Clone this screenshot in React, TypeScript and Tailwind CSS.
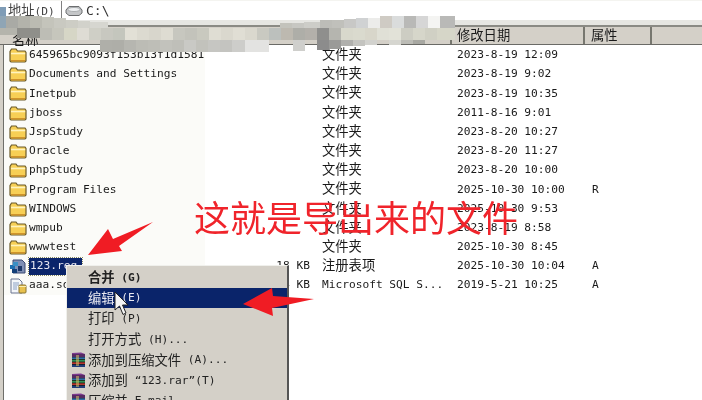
const mono = "font-['DejaVu_Sans_Mono','Noto_Sans_CJK_SC',monospace] text-[11.2px]";
const cjk = "font-['Noto_Sans_CJK_SC',sans-serif] text-[13.3px] leading-[16px]";

type Row = { name: string; kind: 'folder' | 'reg' | 'sql'; size?: string; type: string; date: string; attr?: string };

const rows: Row[] = [
  { name: '645965bc9093f153b13f1d1581', kind: 'folder', type: '文件夹', date: '2023-8-19 12:09' },
  { name: 'Documents and Settings', kind: 'folder', type: '文件夹', date: '2023-8-19 9:02' },
  { name: 'Inetpub', kind: 'folder', type: '文件夹', date: '2023-8-19 10:35' },
  { name: 'jboss', kind: 'folder', type: '文件夹', date: '2011-8-16 9:01' },
  { name: 'JspStudy', kind: 'folder', type: '文件夹', date: '2023-8-20 10:27' },
  { name: 'Oracle', kind: 'folder', type: '文件夹', date: '2023-8-20 11:27' },
  { name: 'phpStudy', kind: 'folder', type: '文件夹', date: '2023-8-20 10:00' },
  { name: 'Program Files', kind: 'folder', type: '文件夹', date: '2025-10-30 10:00', attr: 'R' },
  { name: 'WINDOWS', kind: 'folder', type: '文件夹', date: '2025-10-30 9:53' },
  { name: 'wmpub', kind: 'folder', type: '文件夹', date: '2023-8-19 8:58' },
  { name: 'wwwtest', kind: 'folder', type: '文件夹', date: '2025-10-30 8:45' },
  { name: '123.reg', kind: 'reg', size: '18 KB', type: '注册表项', date: '2025-10-30 10:04', attr: 'A' },
  { name: 'aaa.sql', kind: 'sql', size: '4 KB', type: 'Microsoft SQL S...', date: '2019-5-21 10:25', attr: 'A' },
];

// the blurred-out strip across the header: [x, y, w, h, colour]
const mosaic: [number, number, number, number, string][] = [
  [0, 7, 6, 9, '#7f9cb6'], [0, 16, 6, 12, '#8fa5b5'], [6, 16, 12, 12, '#a9aaa5'], [18, 16, 12, 12, '#b3b3ab'],
  [30, 16, 12, 12, '#bbbbb2'], [42, 17, 12, 11, '#c4c4bb'], [54, 18, 12, 10, '#c9c9c1'], [66, 20, 12, 8, '#cdcdc5'],
  [78, 21, 12, 7, '#d2d2cb'], [90, 22, 18, 6, '#d6d6d0'],
  [280, 23, 12, 5, '#c3c3bc'], [292, 23, 12, 5, '#c7c7c2'], [304, 22, 16, 6, '#cdcdc8'], [320, 20, 12, 8, '#bdbdb8'],
  [332, 20, 12, 8, '#c0c0bb'], [344, 19, 12, 9, '#c8c8c6'], [356, 18, 12, 10, '#d0d2d3'], [368, 18, 12, 10, '#ececea'],
  [380, 16, 12, 12, '#cfcbc4'], [392, 16, 12, 12, '#dadcdc'], [404, 16, 12, 12, '#b9b9b7'], [416, 16, 12, 12, '#d6d6d6'],
  [428, 16, 12, 12, '#f4f4f2'], [440, 16, 15, 12, '#b9b9b7'],
  [0, 28, 17, 7, '#b4b4ac'], [17, 28, 23, 10, '#8f8f8a'], [40, 28, 12, 12, '#bdbdb5'], [52, 28, 12, 12, '#c6c6bc'],
  [64, 28, 13, 12, '#d6d6c6'], [77, 28, 12, 12, '#dedcd4'], [89, 28, 12, 12, '#cfcfc6'], [101, 28, 12, 12, '#c8c8c0'],
  [113, 28, 12, 12, '#c4c6bd'], [125, 28, 12, 12, '#e2e0d6'], [137, 28, 12, 12, '#dcdad0'], [149, 28, 12, 12, '#d8d6cc'],
  [161, 28, 12, 12, '#dedcd2'], [173, 28, 12, 12, '#c7c7bf'], [185, 28, 12, 12, '#c3c3bb'], [197, 28, 12, 12, '#c9c9bf'],
  [209, 28, 12, 12, '#dfddd3'], [221, 28, 12, 12, '#dad8ce'], [233, 28, 12, 12, '#e0ded4'], [245, 28, 12, 12, '#dad8ce'],
  [257, 28, 12, 12, '#c9c9c1'], [269, 28, 12, 12, '#bcc0bd'], [281, 28, 12, 12, '#bdb9b0'], [293, 28, 12, 12, '#aeaea8'],
  [305, 28, 12, 12, '#b3b0aa'], [317, 28, 12, 12, '#8f8f8d'], [329, 28, 12, 12, '#b5b5af'], [341, 28, 12, 12, '#d8d8cc'],
  [353, 28, 12, 12, '#dadace'], [365, 28, 12, 12, '#d8d6ca'], [377, 28, 12, 12, '#e0e0d6'], [389, 28, 12, 12, '#e2e2d8'],
  [401, 28, 12, 12, '#cdcdc3'], [413, 28, 12, 12, '#d6d6ca'], [425, 28, 12, 12, '#d0d0c4'], [437, 28, 18, 12, '#d6d6c8'],
  [100, 40, 12, 12, '#afafa9'], [112, 40, 12, 12, '#aeaea8'], [124, 40, 12, 12, '#b6b6b0'], [136, 40, 12, 12, '#bcbcb5'],
  [148, 40, 12, 12, '#bebeb7'], [160, 40, 12, 12, '#c2c2bc'], [172, 40, 12, 12, '#bfbfb9'], [184, 40, 12, 12, '#c9c9c5'],
  [196, 40, 12, 12, '#c2c2bc'], [208, 40, 12, 12, '#c6c6c2'], [220, 40, 12, 12, '#c4c4c0'], [232, 40, 13, 12, '#cdcdca'],
  [245, 40, 24, 12, '#e3e3e1'], [293, 40, 12, 11, '#cfcfcc'],
  [317, 40, 12, 10, '#8c8c8c'], [329, 40, 12, 9, '#9a9a98'], [341, 40, 12, 6, '#b0b0ad'], [353, 40, 12, 6, '#c4c4c0'],
  [365, 40, 12, 5, '#d2d2ce'], [389, 40, 12, 5, '#d6d6d0'], [401, 40, 12, 4, '#bcbcb6'], [413, 40, 12, 4, '#a8a8a2'],
];

function FolderIcon() {
  return (
    <svg width="18" height="15" viewBox="0 0 18 15" className="shrink-0">
      <path d="M1 3.5 L2.5 1 H7 L8.5 3 H16 L17 4.5 V13 L16 14 H2 L1 13 Z" fill="#f7cf55" stroke="#6b5a2a" strokeWidth="1.2" />
      <path d="M2 5.5 H16.2" stroke="#fff3bd" strokeWidth="1.6" />
      <path d="M2 12.7 H16" stroke="#d0932a" strokeWidth="1.4" />
    </svg>
  );
}

function RegIcon() {
  return (
    <svg width="18" height="16" viewBox="0 0 18 16" className="shrink-0">
      <path d="M4 1 H13 L16 4 V14 H4 Z" fill="#7f8fb5" stroke="#3c4a72" />
      <rect x="1" y="6" width="5" height="4" fill="#1f6fb0" />
      <rect x="4" y="3" width="5" height="4" fill="#3a8fc4" />
      <rect x="3" y="10" width="5" height="4" fill="#143f78" />
      <rect x="9" y="7" width="4" height="5" fill="#1c3768" />
    </svg>
  );
}

function SqlIcon() {
  return (
    <svg width="18" height="16" viewBox="0 0 18 16" className="shrink-0">
      <path d="M2 1 H10 L13 4 V15 H2 Z" fill="#f4f6fa" stroke="#6a7590" />
      <path d="M4 5 H10 M4 7 H10 M4 9 H8 M4 11 H8" stroke="#8aa0c4" />
      <rect x="10" y="7" width="7" height="8" rx="1" fill="#e8c14f" stroke="#8a7430" />
      <path d="M10 8.5 H17" stroke="#fbeeb0" />
    </svg>
  );
}

function RarIcon() {
  return (
    <svg width="16" height="15" viewBox="0 0 16 15" className="shrink-0">
      <path d="M2 1 L11 0.5 L15 2 V5 H2 Z" fill="#7c3a8f" />
      <path d="M2 5 H15 V7 H2 Z" fill="#2f6fa8" />
      <path d="M2 7 H15 V10 H2 Z" fill="#2f8f55" />
      <path d="M2 10 H15 V12 H2 Z" fill="#b8372f" />
      <path d="M2 12 H15 V15 H2 Z" fill="#1f3d7a" />
      <path d="M2 3 H15 M2 5 H15 M2 7.5 H15 M2 10 H15 M2 12.5 H15" stroke="#111" strokeWidth="0.7" />
      <rect x="6" y="3" width="3" height="11" fill="#d8c26a" opacity="0.55" />
    </svg>
  );
}

function MenuItem({ icon, active, bold, label, hint }: { icon?: boolean; active?: boolean; bold?: boolean; label: string; hint: string }) {
  return (
    <div className={`flex h-[20.6px] items-center pl-[1px] ${active ? 'bg-[#0a246a] text-[#e8e8f0]' : 'text-[#222]'}`}>
      <div className="flex w-[20px] justify-center">{icon && <RarIcon />}</div>
      <span className={`${cjk} whitespace-nowrap ${bold ? 'font-bold' : ''}`}>{label}</span>
      <span className={`${mono} mt-[2px] whitespace-pre ${bold ? 'font-bold' : ''}`}>{hint}</span>
    </div>
  );
}

export default function App() {
  return (
    <div className="relative h-[400px] w-[702px] overflow-hidden bg-white text-[#1a1a1a] blur-[0.35px]">
      {/* address bar */}
      <div className="flex h-[20px] items-center border-t border-[#f4f4f0]">
        <div className={`${cjk} w-[61px] whitespace-nowrap pl-2 text-[#444]`}>
          地址<span className={mono}>(D)</span>
        </div>
        <div className="h-full w-px bg-[#808080]" />
        <svg width="20" height="12" viewBox="0 0 20 12" className="ml-[2px]">
          <path d="M2 5 L5 1.5 H15 L18 5 V8 L15 10.5 H5 L2 8 Z" fill="#c4c6c8" stroke="#6c6e70" />
          <ellipse cx="10" cy="4.5" rx="6" ry="2" fill="#eef0f2" stroke="#8c8e90" strokeWidth="0.6" />
        </svg>
        <span className="ml-[2px] font-['DejaVu_Sans_Mono',monospace] text-[13px] text-[#333]">C:\</span>
      </div>

      {/* band above the column heads */}
      <div className="h-[7px] border-b-2 border-[#8a8a84] bg-[#e6e6e2]" />

      {/* column heads */}
      <div className="flex h-[18px] border-b border-[#6a6a66] bg-[#d4d0c8] pl-[4px]">
        <div className="w-[448px] border-r-2 border-[#77776f]">
          <span className={`${cjk} pl-2`}>名称</span>
        </div>
        <div className={`${cjk} w-[133px] border-r-2 border-[#77776f] pl-[5px]`}>修改日期</div>
        <div className={`${cjk} w-[67px] border-r-2 border-[#77776f] pl-[6px]`}>属性</div>
      </div>

      {/* file list */}
      <div className="flex h-[355px] border-l-[3px] border-l-[#d4d0c8]">
        <div className="w-full border-l border-l-[#6f6f6a] pt-[1px]">
          {rows.map((row) => (
            <div key={row.name} className={`${mono} flex h-[19.2px] items-center whitespace-nowrap`}>
              <div className="flex h-full w-[201px] shrink-0 items-center bg-[#fbfbf8] pl-[5px]">
                {row.kind === 'folder' && <FolderIcon />}
                {row.kind === 'reg' && <RegIcon />}
                {row.kind === 'sql' && <SqlIcon />}
                {row.kind === 'reg' ? (
                  <span className="ml-[2px] bg-[#0a246a] pl-px pr-[5px] text-[#e6e6f0] outline-1 outline-dotted outline-[#8a8a60]">
                    {row.name}
                  </span>
                ) : (
                  <span className="ml-[2px]">{row.name}</span>
                )}
              </div>
              <div className="w-[105px] shrink-0 text-right">{row.size}</div>
              <div className="w-[12px] shrink-0" />
              <div className={`w-[135px] shrink-0 ${row.type.startsWith('Micro') ? '' : `${cjk} -mt-[3px]`}`}>{row.type}</div>
              <div className="w-[135px] shrink-0">{row.date}</div>
              <div>{row.attr}</div>
            </div>
          ))}
        </div>
      </div>

      {/* pixelated strip hiding the toolbar */}
      <svg width="460" height="60" viewBox="0 0 460 60" className="absolute left-0 top-0">
        {mosaic.map(([x, y, w, h, fill]) => (
          <rect key={`${x}-${y}`} x={x} y={y} width={w} height={h} fill={fill} />
        ))}
      </svg>

      {/* context menu */}
      <div className="absolute left-[66px] top-[265px] h-[140px] w-[223px] border border-r-2 border-[#f0f0ec] border-r-[#555] bg-[#d4d0c8] pt-[1px]">
        <MenuItem bold label="合并" hint=" (G)" />
        <MenuItem active label="编辑" hint=" (E)" />
        <MenuItem label="打印" hint=" (P)" />
        <MenuItem label="打开方式" hint=" (H)..." />
        <MenuItem icon label="添加到压缩文件" hint=" (A)..." />
        <MenuItem icon label="添加到" hint=" “123.rar”(T)" />
        <MenuItem icon label="压缩并" hint=" E-mail..." />
      </div>

      {/* mouse pointer */}
      <svg width="16" height="26" viewBox="0 0 16 26" className="absolute left-[114px] top-[291px]">
        <path d="M1 1 V19 L5.5 15 L9 23.5 L12 22 L8.5 14 H14 Z" fill="#f4f4f4" stroke="#222" />
      </svg>

      {/* red annotation */}
      <svg width="702" height="400" viewBox="0 0 702 400" className="absolute left-0 top-0">
        <path d="M88 255 L108 229 L113 239 L153 222 L119 246 L122 251 Z" fill="#f01c24" />
        <path d="M243 304 L272 288 L273 296 L314 299 L272 308 L273 316 Z" fill="#f01c24" />
      </svg>
      <div className="absolute left-[194px] top-[191px] whitespace-nowrap font-['Noto_Sans_CJK_SC',sans-serif] text-[36px] leading-[50px] text-[#f0242b]">
        这就是导出来的文件
      </div>
    </div>
  );
}
